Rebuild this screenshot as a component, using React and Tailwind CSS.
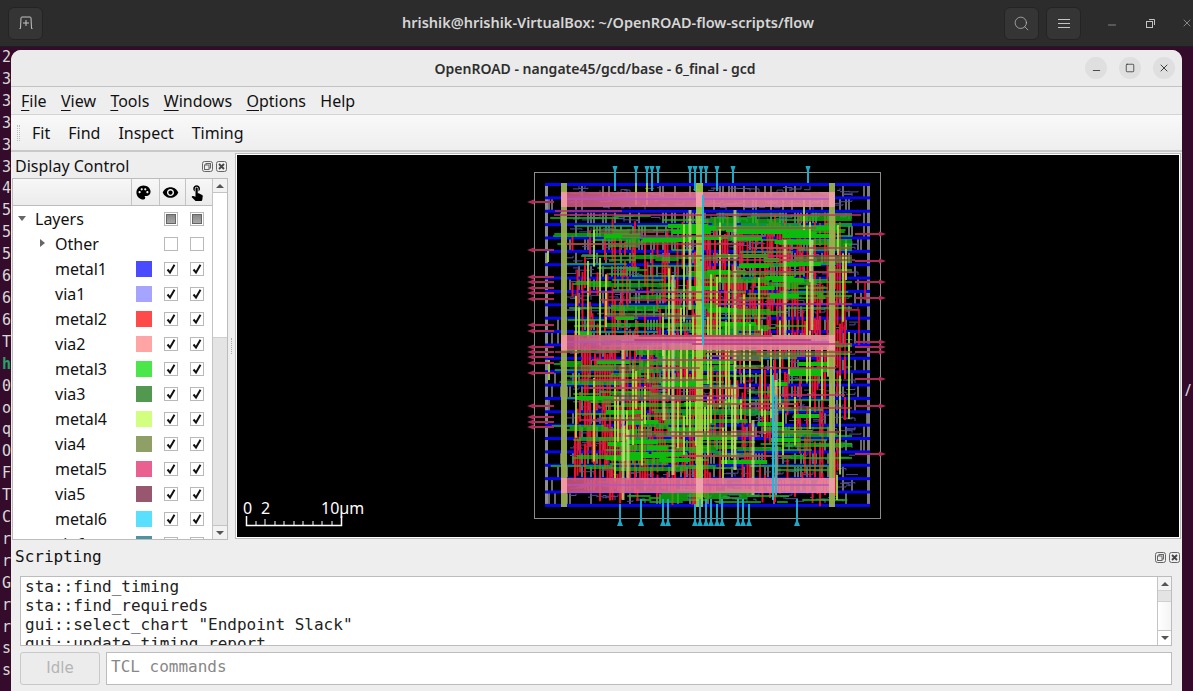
import React from 'react';
import { MdPalette, MdRemoveRedEye, MdTouchApp } from 'react-icons/md';
import { Search, Minus, Square, X } from 'lucide-react';

const uiFont = "font-['Noto_Sans',sans-serif]";
const monoFont = "font-['DejaVu_Sans_Mono',monospace]";

const termLines = ['2', '3', '3', '3', '3', '3', '4', '5', '5', '5', '6', '6', '6', 'T', 'h', '0', 'o', 'q', 'O', 'F', 'T', 'C', 'r', 'r', 'G', 'r', 'r', 's', 's'];

const layers = [
    ['metal1', 'bg-[#4a4aff]'],
    ['via1', 'bg-[#a5a5ff]'],
    ['metal2', 'bg-[#ff4a4a]'],
    ['via2', 'bg-[#ffa5a5]'],
    ['metal3', 'bg-[#4ae64a]'],
    ['via3', 'bg-[#52994f]'],
    ['metal4', 'bg-[#d2ff80]'],
    ['via4', 'bg-[#8f9f66]'],
    ['metal5', 'bg-[#e96090]'],
    ['via5', 'bg-[#99566f]'],
    ['metal6', 'bg-[#5ae0ff]'],
    ['via6', 'bg-[#4f93a0]'],
];

// small seeded generator so the routing looks the same on every run
const makeRand = (seed) => () => {
    seed = (seed + 0x6d2b79f5) | 0;
    let t = Math.imul(seed ^ (seed >>> 15), 1 | seed);
    t = (t + Math.imul(t ^ (t >>> 7), 61 | t)) ^ t;
    return ((t ^ (t >>> 14)) >>> 0) / 4294967296;
};
const rand = makeRand(4711);
const between = (a, b) => a + rand() * (b - a);
const snap = (v, step) => Math.round(v / step) * step;

const railYs = Array.from({ length: 25 }, (_, i) => 184.5 + i * 13.37);

const vLines = (count, x0, x1, y0, y1, l0, l1, step = 2) => {
    let d = '';
    for (let i = 0; i < count; i++) {
        const x = snap(between(x0, x1), step);
        const y = between(y0, y1);
        d += `M${x} ${y.toFixed(1)}v${between(l0, l1).toFixed(1)}`;
    }
    return d;
};
const hLines = (count, x0, x1, y0, y1, l0, l1, step = 2, maxX = 852) => {
    let d = '';
    for (let i = 0; i < count; i++) {
        const y = snap(between(y0, y1), step);
        const x = between(x0, x1);
        const end = Math.min(x + between(l0, l1), maxX);
        d += `M${x.toFixed(1)} ${y}H${end.toFixed(1)}`;
    }
    return d;
};

// standard cell pins between the rails
let grayPath = '';
let cellPath = '';
railYs.slice(0, -1).forEach((y) => {
    for (let i = 0; i < 50; i++) {
        const x = snap(between(549, 866), 3);
        const edge = x > 845 || x < 575 || y > 480 || y < 200;
        if (edge && rand() < 0.6) continue;
        grayPath += `M${x} ${(y + 1).toFixed(1)}v12`;
    }
    for (let i = 0; i < 40; i++) {
        const x = snap(between(566, 850), 3);
        const yy = y + between(3, 10);
        cellPath += `M${x} ${yy.toFixed(1)}h${snap(between(3, 12), 3)}v${between(-4, 4).toFixed(0)}`;
    }
});

const redPath =
    vLines(400, 572, 846, 218, 462, 14, 50, 2.5) +
    vLines(130, 575, 700, 345, 468, 15, 40, 2.5) +
    vLines(110, 700, 845, 212, 330, 15, 50, 2.5) +
    vLines(50, 610, 830, 470, 492, 10, 16, 2.5);
const greenPath =
    hLines(250, 548, 790, 215, 470, 20, 90) +
    hLines(50, 560, 700, 350, 470, 20, 90) +
    hLines(55, 700, 830, 212, 300, 20, 80) +
    hLines(22, 620, 810, 490, 503, 10, 50);
const greenThick =
    hLines(60, 575, 800, 222, 465, 12, 40) +
    hLines(12, 640, 800, 226, 240, 25, 60);
const maroonPath =
    hLines(34, 560, 760, 215, 470, 60, 180, 4) +
    'M554 215H861M555 352H620M700 260H855M780 395H845M600 300H760M640 432H840M622 211H555';
const limePath =
    vLines(58, 575, 850, 220, 390, 30, 100, 3) +
    vLines(24, 600, 800, 395, 430, 20, 60, 3) +
    'M636 175v30M647 175v30M804 200v30M838 225v30M837 475v25M548 250v12M549 360v20';
const palePath = 'M623 340v160M664 340v80M673 275v200M735 210v260M753 420v75M785 240v100M628 430v50M776 380v110M690 210v100M812 240v90';

const leftPins = [202, 250, 277, 282, 288, 293, 299, 325, 331, 347, 352, 357, 363, 373, 406, 417, 422, 427];
const rightPins = [234, 261, 282, 298, 342, 347, 352, 379, 406, 454];
const topPins = [615, 636, 647, 652, 658, 690, 695, 701, 706, 717, 733, 808];
const bottomPins = [620, 641, 663, 668, 695, 700, 706, 711, 717, 722, 738, 743, 749, 797];

const ChipLayout = () => (
    <svg viewBox="237 155 942 382" className="block w-full h-full">
        <defs>
            <linearGradient id="strap" x1="0" x2="1" y1="0" y2="0">
                <stop offset="0" stopColor="#c8527c" />
                <stop offset="0.3" stopColor="#e06c90" />
                <stop offset="1" stopColor="#ec8aa0" />
            </linearGradient>
        </defs>
        <rect x="534.5" y="172.5" width="346" height="346" fill="none" stroke="#8c8c8c" strokeWidth="1" />
        <path d={grayPath} stroke="#8f8f8f" strokeWidth="1.5" fill="none" />
        <rect x="545" y="184" width="3" height="322" fill="#8f8f8f" />
        <rect x="867" y="186" width="3" height="320" fill="#808080" />
        <path d={cellPath} stroke="#5050a0" strokeWidth="1" fill="none" />
        {railYs.map((y) => (
            <rect key={y} x="545" y={y - 1.5} width="325" height="3" fill="#0606ee" />
        ))}
        <path d={redPath} stroke="#e60f2e" strokeWidth="2" fill="none" />
        <path d="M858 282H865V300M845 300v60M842 310h17v35M820 298h22v50" stroke="#e0102e" strokeWidth="1.5" fill="none" />
        <path d={greenPath} stroke="#10c010" strokeWidth="1.5" fill="none" />
        <path d={greenThick} stroke="#0cbc0c" strokeWidth="4" fill="none" />
        <path d={limePath} stroke="#a6e044" strokeWidth="2" fill="none" opacity="0.9" />
        <path d={palePath} stroke="#c8d880" strokeWidth="3" fill="none" opacity="0.8" />
        <rect x="561" y="183" width="6" height="324" fill="#9bb050" opacity="0.95" />
        <rect x="829" y="183" width="6" height="324" fill="#9bb050" opacity="0.95" />
        <rect x="696" y="183" width="7" height="324" fill="#a4e040" opacity="0.85" />
        {[192, 335, 478].map((y) => (
            <g key={y}>
                <rect x="561" y={y} width="274" height="15" fill="url(#strap)" opacity="0.9" />
                <rect x="561" y={y + 6} width="274" height="2" fill="#b453c4" opacity="0.7" />
                <rect x="561" y={y} width="6" height="15" fill="#f09aa0" />
                <rect x="829" y={y} width="6" height="15" fill="#e8a0a0" />
                <rect x="696" y={y} width="7" height="15" fill="#f0a0a8" />
            </g>
        ))}
        <path d={maroonPath} stroke="#c23266" strokeWidth="1.5" fill="none" />
        <path d="M703 195v150M773 375v125M776 395v100" stroke="#22b8d8" strokeWidth="2" fill="none" />
        {leftPins.map((y) => (
            <path key={y} d={`M527 ${y}l7 -2.5v1.5h20v2h-20v1.5z`} fill="#b02a5c" />
        ))}
        {rightPins.map((y) => (
            <path key={y} d={`M886 ${y}l-7 -2.5v1.5h-24v2h24v1.5z`} fill="#b02a5c" />
        ))}
        {topPins.map((x, i) => (
            <path key={x} d={`M${x - 2.5} 166h5l-1.5 5v${i % 3 === 0 ? 20 : 12}h-2v${i % 3 === 0 ? -20 : -12}z`} fill="#1fa7c6" />
        ))}
        {bottomPins.map((x, i) => (
            <path key={x} d={`M${x - 3} 526h6l-2 -5v${i % 4 === 0 ? -17 : -22}h-2v${i % 4 === 0 ? 17 : 22}z`} fill="#1fa7c6" />
        ))}
        <path d="M246.5 516v9.5h95V516" stroke="#fff" strokeWidth="1.5" fill="none" />
        <path d="M256 521v4M265 519v6M275 521v4M284 521v4M294 521v4M303 521v4M313 521v4M322 521v4M332 521v4" stroke="#fff" strokeWidth="1" fill="none" />
        <text x="243" y="514" fill="#fff" fontSize="16" fontFamily="Noto Sans, sans-serif">0</text>
        <text x="261" y="514" fill="#fff" fontSize="16" fontFamily="Noto Sans, sans-serif">2</text>
        <text x="321" y="514" fill="#fff" fontSize="16" fontFamily="Noto Sans, sans-serif">10µm</text>
    </svg>
);

const Check = ({ state }) => (
    <div className="w-[14px] h-[14px] border border-[#b9b9b9] bg-white flex items-center justify-center shrink-0">
        {state === 'on' && (
            <svg width="12" height="12" viewBox="0 0 12 12">
                <path d="M2.5 6.5L5 9.5L9.5 1.8" stroke="#111" strokeWidth="2" fill="none" />
            </svg>
        )}
        {state === 'partial' && <div className="w-[10px] h-[10px] border border-[#666] bg-gradient-to-b from-[#888] to-[#a8a8a8]" />}
    </div>
);

const Row = ({ label, indent, arrow, swatch, state = 'on' }) => (
    <div className="h-[25px] flex items-center relative shrink-0">
        <div className={`flex items-center text-[16px] text-[#111] w-[119px] ${indent ? 'pl-[42px]' : 'pl-[22px]'}`}>
            {label}
        </div>
        {arrow === 'down' && <div className="absolute left-[5px] top-[10px] w-0 h-0 border-x-[4px] border-x-transparent border-t-[5px] border-t-[#666]" />}
        {arrow === 'right' && <div className="absolute left-[27px] top-[8px] w-0 h-0 border-y-[4px] border-y-transparent border-l-[5px] border-l-[#666]" />}
        <div className="w-[16px] h-[16px] ml-[4px] shrink-0 flex">
            {swatch && <div className={`w-full h-full ${swatch}`} />}
        </div>
        <div className="ml-[12px]"><Check state={state} /></div>
        <div className="ml-[12px]"><Check state={state} /></div>
    </div>
);

const DockButtons = () => (
    <div className="flex gap-[3px]">
        <svg width="11" height="11" viewBox="0 0 11 11" fill="none" stroke="#666">
            <rect x="0.5" y="0.5" width="10" height="10" rx="2" />
            <rect x="4" y="2.5" width="4.5" height="4.5" />
            <rect x="2.5" y="4" width="4.5" height="4.5" fill="#eee" />
        </svg>
        <svg width="11" height="11" viewBox="0 0 11 11" fill="none" stroke="#666">
            <rect x="0.5" y="0.5" width="10" height="10" rx="2" />
            <path d="M3 3l5 5M8 3l-5 5" stroke="#444" strokeWidth="1.8" />
        </svg>
    </div>
);

const Arrow = ({ up }) => (
    <div className={`w-0 h-0 border-x-[4px] border-x-transparent ${up ? 'border-b-[4px] border-b-[#555]' : 'border-t-[4px] border-t-[#555]'}`} />
);

const HeaderBtn = ({ children }) => (
    <div className="w-[35px] h-[33px] rounded-[6px] bg-[#353535] border border-[#242424] flex items-center justify-center text-[#c4c4c4]">
        {children}
    </div>
);

const WinBtn = ({ children }) => (
    <div className="w-[22px] h-[22px] rounded-full bg-[#dfdfdf] flex items-center justify-center text-[#2e2e2e]">
        {children}
    </div>
);

const Mnemonic = ({ first, rest }) => (
    <span><span className="underline decoration-1 underline-offset-[3px]">{first}</span>{rest}</span>
);

export default function App() {
    return (
        <div className={`w-[1193px] h-[691px] overflow-hidden flex flex-col bg-[#340b2b] ${uiFont}`}>
            <header className="h-[47px] shrink-0 bg-[#2c2c2c] border-b border-[#1e1e1e] flex items-center pl-[8px] pr-0">
                <HeaderBtn>
                    <svg width="16" height="16" viewBox="0 0 16 16" fill="none" stroke="#c4c4c4" strokeWidth="1">
                        <path d="M1.5 13.5h1l.5-10.5q0-1 1-1h8q1 0 1 1l.5 10.5h1" />
                        <path d="M8 5v6M5 8h6" />
                    </svg>
                </HeaderBtn>
                <div className="flex-1 text-center text-[14.5px] font-semibold text-[#d6d6d6] pl-[169px]">
                    hrishik@hrishik-VirtualBox: ~/OpenROAD-flow-scripts/flow
                </div>
                <div className="flex gap-[7px] items-center">
                    <HeaderBtn><Search size={17} strokeWidth={1} /></HeaderBtn>
                    <HeaderBtn>
                        <svg width="12" height="11" viewBox="0 0 12 11" stroke="#c4c4c4"><path d="M0 1.5h12M0 5.5h12M0 9.5h12" /></svg>
                    </HeaderBtn>
                </div>
                <div className="w-[112px] flex items-center text-[#c4c4c4] overflow-hidden">
                    <Minus size={12} strokeWidth={1.2} className="ml-[25px] mt-[4px] shrink-0" />
                    <svg width="9" height="9" viewBox="0 0 9 9" fill="none" stroke="#c4c4c4" className="ml-[28px] shrink-0">
                        <rect x="0.5" y="2.5" width="6" height="6" />
                        <path d="M3 .5h5.5V6" />
                    </svg>
                    <X size={12} strokeWidth={1.2} className="ml-[26px] shrink-0" />
                </div>
            </header>

            <div className="flex-1 min-h-0 flex pt-[3px]">
                <div className={`w-[11px] shrink-0 overflow-hidden -mt-[3px] pl-[2px] text-[15px] leading-[21.9px] text-[#d8d8d8] ${monoFont}`}>
                    {termLines.map((t, i) => (
                        <div key={i} className={t === 'h' ? 'text-[#26a269] font-bold' : ''}>{t}</div>
                    ))}
                </div>

                <div className="flex-1 min-w-0 flex flex-col rounded-t-[10px] overflow-hidden bg-[#eeeeee]">
                    <div className="h-[37px] shrink-0 bg-[#ebebeb] border-b border-[#c4c4c4] flex items-center relative">
                        <div className="flex-1 text-center text-[14px] font-semibold text-[#2e2e2e] pr-[3px]">OpenROAD - nangate45/gcd/base - 6_final - gcd</div>
                        <div className="absolute right-[7px] top-[7px] flex gap-[12px]">
                            <WinBtn><Minus size={11} strokeWidth={1.8} className="mt-[5px]" /></WinBtn>
                            <WinBtn><Square size={10} strokeWidth={1.8} /></WinBtn>
                            <WinBtn><X size={12} strokeWidth={1.8} /></WinBtn>
                        </div>
                    </div>

                    <div className="h-[28px] shrink-0 border-b border-[#d4d4d4] flex items-center pl-[10px] gap-[14.4px] text-[16px] text-[#111] bg-[#eeeeee]">
                        <Mnemonic first="F" rest="ile" />
                        <Mnemonic first="V" rest="iew" />
                        <Mnemonic first="T" rest="ools" />
                        <Mnemonic first="W" rest="indows" />
                        <Mnemonic first="O" rest="ptions" />
                        <span>Help</span>
                    </div>

                    <div className="h-[37px] shrink-0 bg-gradient-to-b from-[#f9f9f9] to-[#eeeeee] border-b-2 border-[#c9c9c9] flex items-center pl-[6px] text-[16px] text-[#111]">
                        <div className="w-[3px] h-[16px] border-x border-dotted border-[#bdbdbd] mr-[12px]" />
                        <div className="flex gap-[18px]">
                            <span>Fit</span>
                            <span>Find</span>
                            <span>Inspect</span>
                            <span>Timing</span>
                        </div>
                    </div>

                    <div className="h-[388px] shrink-0 flex">
                        <div className="w-[217px] shrink-0 flex flex-col pl-px">
                            <div className="h-[26px] shrink-0 flex items-center justify-between pl-[3px] pt-[2px] pr-[1px] text-[16px] text-[#111]">
                                <span>Display Control</span>
                                <DockButtons />
                            </div>
                            <div className="flex-1 min-h-0 border border-[#bcbcbc] flex bg-white">
                                <div className="flex-1 min-w-0 flex flex-col overflow-hidden">
                                    <div className="h-[27px] shrink-0 border-b border-[#bcbcbc] bg-gradient-to-b from-[#f7f7f7] to-[#ececec] flex text-black">
                                        <div className="w-[119px] border-r border-[#c4c4c4]" />
                                        <div className="w-[28px] border-r border-[#c4c4c4] flex items-center justify-center pr-[5px]"><MdPalette size={17} /></div>
                                        <div className="w-[26px] border-r border-[#c4c4c4] flex items-center justify-center pr-[4px]"><MdRemoveRedEye size={17} /></div>
                                        <div className="flex-1 flex items-center justify-center pr-[5px]"><MdTouchApp size={18} /></div>
                                    </div>
                                    <div className="flex-1 min-h-0 overflow-hidden">
                                        <Row label="Layers" arrow="down" state="partial" />
                                        <Row label="Other" indent arrow="right" state="off" />
                                        {layers.map(([name, color]) => (
                                            <Row key={name} label={name} indent swatch={color} />
                                        ))}
                                    </div>
                                </div>
                                <div className="w-[15px] shrink-0 border-l border-[#c4c4c4] flex flex-col bg-white">
                                    <div className="h-[14px] shrink-0 border-b border-[#c4c4c4] bg-[#f2f2f2] flex items-center justify-center"><Arrow up /></div>
                                    <div className="h-[144px] shrink-0 bg-white" />
                                    <div className="flex-1 bg-[#e4e4e4] border-t border-[#d0d0d0]" />
                                    <div className="h-[14px] shrink-0 border-t border-[#c4c4c4] bg-[#f2f2f2] flex items-center justify-center"><Arrow /></div>
                                </div>
                            </div>
                        </div>

                        <div className="w-[7px] shrink-0 flex items-center justify-center">
                            <div className="w-[2px] h-[16px] border-l border-dotted border-[#aaa]" />
                        </div>

                        <div className="flex-1 min-w-0 mr-px mt-px mb-px border border-[#bcbcbc] bg-white p-px">
                            <div className="w-full h-full bg-black">
                                <ChipLayout />
                            </div>
                        </div>
                    </div>

                    <div className="flex-1 min-h-0 flex flex-col pl-[9px] pr-[10px]">
                        <div className="h-[36px] shrink-0 flex items-center justify-between -ml-[5px] -mr-[9px] pb-[2px] pr-px">
                            <span className={`text-[16px] text-[#111] ${monoFont}`}>Scripting</span>
                            <DockButtons />
                        </div>
                        <div className="h-[70px] shrink-0 border border-[#bcbcbc] bg-white flex">
                            <div className={`flex-1 min-w-0 overflow-hidden pl-[4px] text-[16px] leading-[19px] text-[#222] ${monoFont}`}>
                                <div>sta::find_timing</div>
                                <div>sta::find_requireds</div>
                                <div>gui::select_chart "Endpoint Slack"</div>
                                <div>gui::update_timing_report</div>
                            </div>
                            <div className="w-[14px] shrink-0 border-l border-[#c4c4c4] flex flex-col">
                                <div className="h-[13px] shrink-0 bg-[#f4f4f4] flex items-center justify-center"><Arrow up /></div>
                                <div className="h-[12px] shrink-0 bg-[#e4e4e4] border-y border-[#d0d0d0]" />
                                <div className="flex-1 bg-gradient-to-r from-white to-[#f4f4f4]" />
                                <div className="h-[15px] shrink-0 border-t border-[#c4c4c4] bg-white flex items-center justify-center"><Arrow /></div>
                            </div>
                        </div>
                        <div className="flex gap-[6px] mt-[6px]">
                            <div className="w-[80px] h-[33px] shrink-0 rounded-[3px] border border-[#c8c8c8] bg-[#ececec] flex items-center justify-center text-[15px] text-[#b4b4b4] font-['DejaVu_Sans',sans-serif]">Idle</div>
                            <div className={`flex-1 min-w-0 h-[33px] border border-[#bcbcbc] bg-white flex items-center pl-[4px] pb-[4px] text-[16px] text-[#888] ${monoFont}`}>TCL commands</div>
                        </div>
                    </div>
                </div>

                <div className="w-[11px] shrink-0 relative">
                    <span className="absolute left-[3px] top-[328px] text-[16px] text-[#d8d8d8]">/</span>
                </div>
            </div>
        </div>
    );
}
